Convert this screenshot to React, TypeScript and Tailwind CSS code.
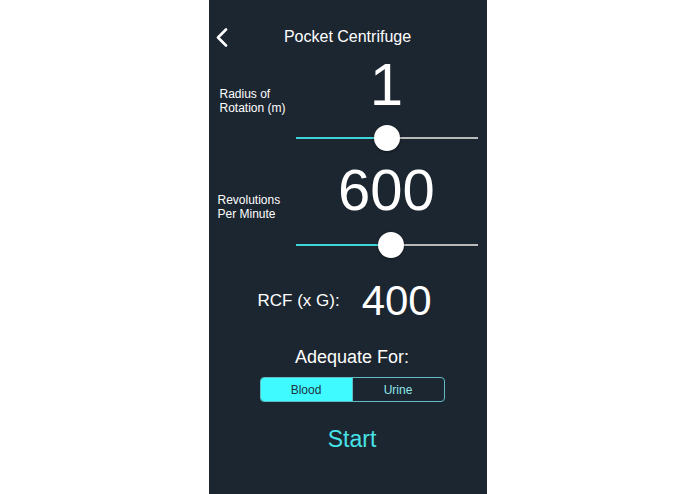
import { useState } from 'react'

const FONT = 'font-["Liberation_Sans",Arial,sans-serif]'

function BackChevron() {
  return (
    <svg width="13" height="19" viewBox="0 0 13 19" fill="none">
      <polyline points="11,1.5 3,9.5 11,17.5" stroke="#ffffff" strokeWidth="2.6" strokeLinecap="round" strokeLinejoin="round" />
    </svg>
  )
}

// track is 182px wide, knob 26px; position is a 0..1 fraction
function Slider({ position }: { position: number }) {
  const left = position * (182 - 26)
  return (
    <div className="relative ml-[87px] h-[26px] w-[182px]">
      <div className="absolute left-0 right-0 top-[12px] flex h-[2px]">
        <div className="h-full bg-[#3fd3da]" style={{ width: left + 13 }} />
        <div className="h-full flex-1 bg-[#b9b9b9]" />
      </div>
      <div
        className="absolute top-0 h-[26px] w-[26px] rounded-full bg-white shadow-[0_1px_3px_rgba(0,0,0,0.4)]"
        style={{ left }}
      />
    </div>
  )
}

function ValueRow({ label, value, size, labelTop }: {
  label: [string, string]; value: string; size: 'big' | 'mid'; labelTop: string
}) {
  return (
    <div className="flex items-start">
      <div className={`w-[87px] text-[12px] leading-[14px] text-white ${labelTop}`}>
        <div>{label[0]}</div>
        <div>{label[1]}</div>
      </div>
      <div
        className={
          size === 'big'
            ? 'w-[182px] text-center text-[60px] leading-[60px] text-white'
            : 'w-[182px] text-center text-[58px] leading-[58px] text-white'
        }
      >
        {value}
      </div>
    </div>
  )
}

function Segmented() {
  const [selected, setSelected] = useState('Blood')
  return (
    <div className="flex h-[25px] w-[185px] overflow-hidden rounded-[4px] border border-[#5fbcc4] text-[12px]">
      {['Blood', 'Urine'].map((opt, i) => (
        <button
          key={opt}
          onClick={() => setSelected(opt)}
          className={
            (selected === opt ? 'bg-[#3ffbff] text-[#1d3443] ' : 'bg-transparent text-[#8fe6ec] ') +
            (i === 0 ? 'border-r border-[#5fbcc4] ' : '') +
            'flex flex-1 items-center justify-center'
          }
        >
          {opt}
        </button>
      ))}
    </div>
  )
}

export default function App() {
  return (
    <div className={`min-h-[494px] w-full bg-white ${FONT}`}>
      <div className="mx-auto flex h-[494px] w-[278px] flex-col bg-[#1c2630]">
        <div className="grid h-[46px] grid-cols-[1fr_auto_1fr] items-center pt-[28px]">
          <div className="flex h-[18px] items-center pl-[6px]">
            <BackChevron />
          </div>
          <div className="text-[16px] leading-[18px] text-white">Pocket Centrifuge</div>
          <div />
        </div>

        <div className="mt-[9px]">
          <ValueRow label={['Radius of', 'Rotation (m)']} value="1" size="big" labelTop="mt-[32px] pl-[11px]" />
        </div>
        <div className="mt-[10px]">
          <Slider position={0.506} />
        </div>

        <div className="mt-[10px]">
          <ValueRow label={['Revolutions', 'Per Minute']} value="600" size="mid" labelTop="mt-[32px] pl-[9px]" />
        </div>
        <div className="mt-[11px]">
          <Slider position={0.532} />
        </div>

        <div className="mt-[21px] flex h-[44px] items-center pl-[49px] text-white">
          <div className="text-[17px] leading-[20px]">RCF (x G):</div>
          <div className="ml-[22px] text-[42px] leading-[44px]">400</div>
        </div>

        <div className="flex flex-col items-center pl-[9px]">
          <div className="mt-[25px] text-[18px] leading-[18px] text-white">Adequate For:</div>
          <div className="mt-[11px]">
            <Segmented />
          </div>
          <button className="mt-[26px] text-[23px] leading-[23px] text-[#46e2e8]">Start</button>
        </div>
      </div>
    </div>
  )
}
